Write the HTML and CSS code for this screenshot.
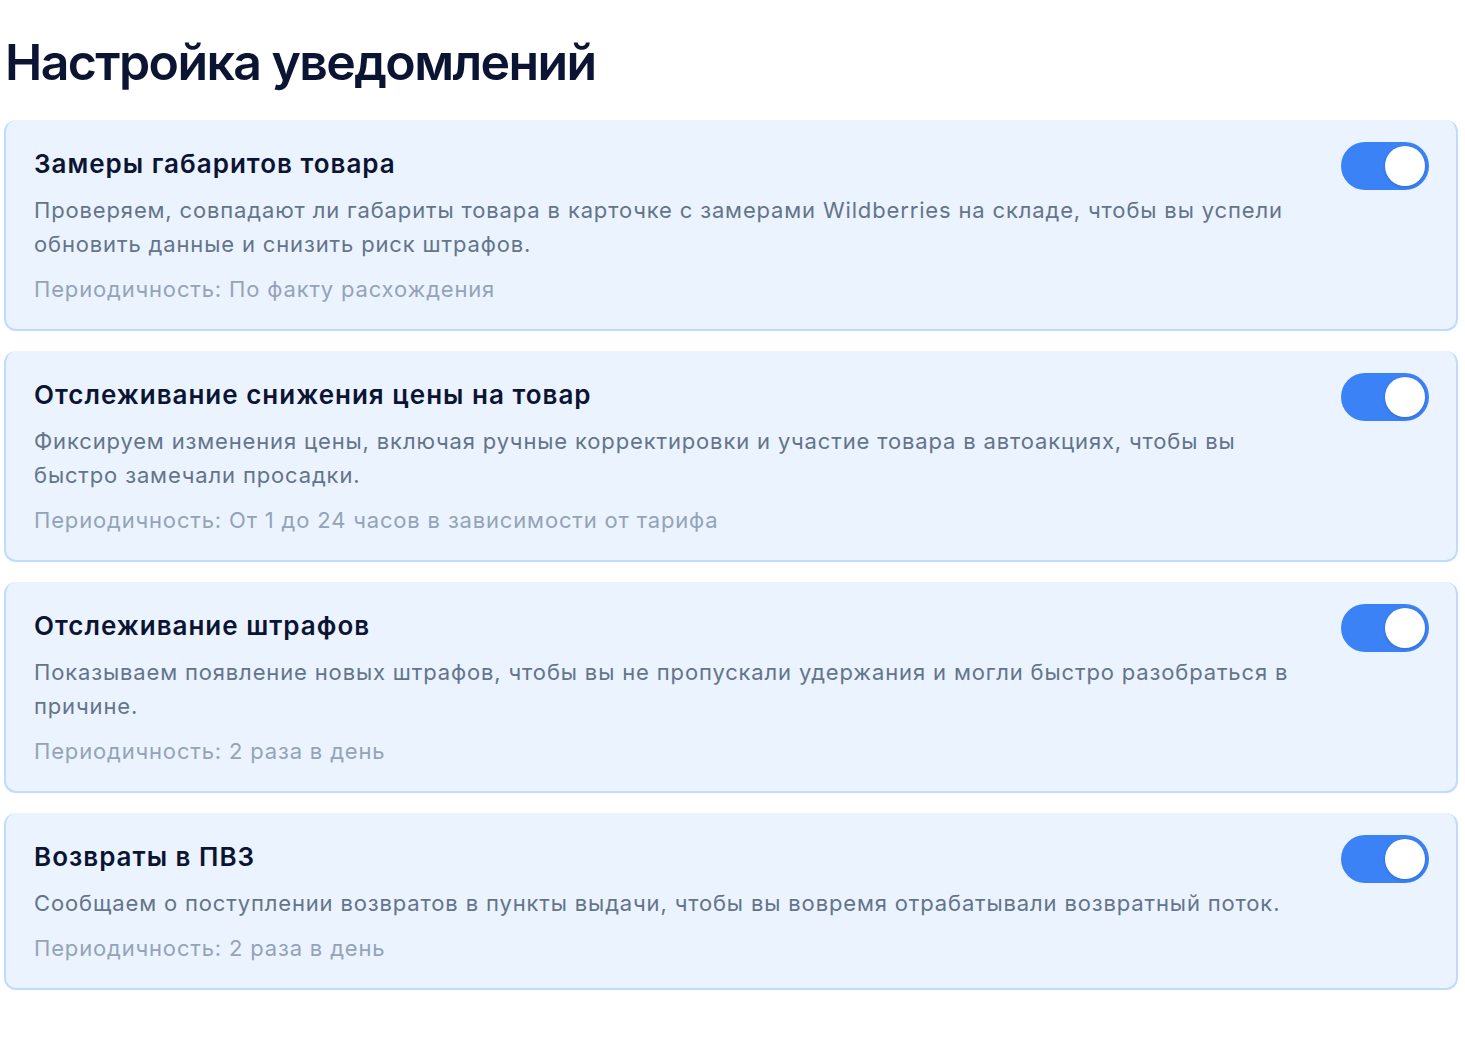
FILE: index.html
```html
<!DOCTYPE html>
<html lang="ru">
<head>
<meta charset="utf-8">
<title>Настройка уведомлений</title>
<link rel="stylesheet" href="styles.css">
</head>
<body>
<main class="page">
  <h1 class="page-title">Настройка уведомлений</h1>
  <section class="list">
    <article class="card">
      <div class="card-text">
        <h2 class="card-title">Замеры габаритов товара</h2>
        <p class="card-desc">Проверяем, совпадают ли габариты товара в карточке с замерами Wildberries на складе, чтобы вы успели обновить данные и снизить риск штрафов.</p>
        <p class="card-period">Периодичность: По факту расхождения</p>
      </div>
      <button class="toggle on" type="button" aria-pressed="true"><span class="knob"></span></button>
    </article>
    <article class="card">
      <div class="card-text">
        <h2 class="card-title">Отслеживание снижения цены на товар</h2>
        <p class="card-desc">Фиксируем изменения цены, включая ручные корректировки и участие товара в автоакциях, чтобы вы быстро замечали просадки.</p>
        <p class="card-period">Периодичность: От 1 до 24 часов в зависимости от тарифа</p>
      </div>
      <button class="toggle on" type="button" aria-pressed="true"><span class="knob"></span></button>
    </article>
    <article class="card">
      <div class="card-text">
        <h2 class="card-title">Отслеживание штрафов</h2>
        <p class="card-desc">Показываем появление новых штрафов, чтобы вы не пропускали удержания и могли быстро разобраться в причине.</p>
        <p class="card-period">Периодичность: 2 раза в день</p>
      </div>
      <button class="toggle on" type="button" aria-pressed="true"><span class="knob"></span></button>
    </article>
    <article class="card">
      <div class="card-text">
        <h2 class="card-title">Возвраты в ПВЗ</h2>
        <p class="card-desc">Сообщаем о поступлении возвратов в пункты выдачи, чтобы вы вовремя отрабатывали возвратный поток.</p>
        <p class="card-period">Периодичность: 2 раза в день</p>
      </div>
      <button class="toggle on" type="button" aria-pressed="true"><span class="knob"></span></button>
    </article>
  </section>
</main>
</body>
</html>
```
FILE: styles.css
```css
* { box-sizing: border-box; }
html, body { margin: 0; padding: 0; background: #ffffff; }
body {
  font-family: Inter, "Noto Sans", "DejaVu Sans", sans-serif;
  color: #0b1533;
}
.page {
  padding: 0 7px 0 4px;
}
.page-title {
  margin: 0;
  padding: 30px 0 0 1px;
  font-size: 50px;
  line-height: 64px;
  font-weight: 600;
  letter-spacing: -1.6px;
  color: #0b1533;
  height: 120px;
}
.list {
  display: flex;
  flex-direction: column;
  gap: 20px;
}
.card {
  display: flex;
  align-items: flex-start;
  gap: 36px;
  background: #ebf3fe;
  border: 2px solid #bfdbfe;
  border-top: 0;
  border-radius: 12px;
  padding: 22px 27px 23px 28px;
}
.card-text {
  flex: 1;
  min-width: 0;
}
.card-title {
  margin: 6px 0 0 0;
  font-size: 26px;
  line-height: 32px;
  font-weight: 600;
  letter-spacing: 1px;
  color: #0b1533;
}
.card-desc {
  margin: 13px 0 0 0;
  font-size: 22px;
  line-height: 34px;
  letter-spacing: 0.85px;
  color: #64748b;
}
.card-period {
  margin: 11px 0 0 0;
  font-size: 22px;
  line-height: 34px;
  letter-spacing: 0.83px;
  color: #94a3b8;
}
.toggle {
  flex: none;
  width: 88px;
  height: 48px;
  border: 0;
  padding: 4px;
  border-radius: 24px;
  background: #3b82f6;
  display: flex;
  justify-content: flex-end;
  cursor: pointer;
}
.knob {
  width: 40px;
  height: 40px;
  border-radius: 50%;
  background: #ffffff;
  box-shadow: 0 1px 3px rgba(15, 23, 42, 0.2);
}
```
